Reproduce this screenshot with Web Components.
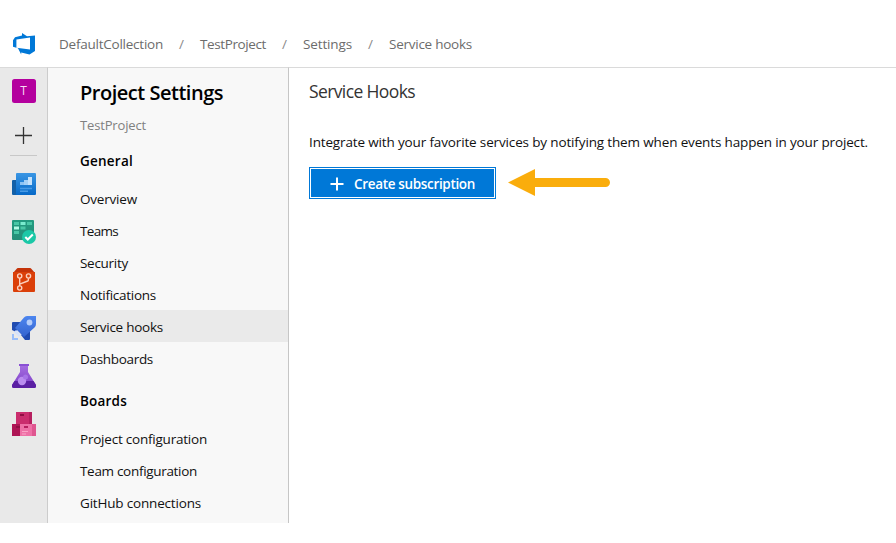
<!DOCTYPE html>
<html lang="en">
<head>
<meta charset="utf-8">
<title>Service hooks - Project Settings</title>
<style>
html,body{margin:0;height:543px;overflow:hidden;background:#fff}
body{font-family:"Open Sans","Noto Sans",sans-serif;font-size:13.5px;color:#111}
</style>
</head>
<body>
<settings-app></settings-app>

<template id="t-app">
<style>
:host{display:grid;grid-template:67px 456px / 48px 241px 1fr;width:896px;height:523px;box-sizing:border-box}
top-bar{grid-column:1 / -1}
</style>
<top-bar></top-bar>
<icon-rail></icon-rail>
<settings-nav></settings-nav>
<hooks-page></hooks-page>
</template>

<template id="t-top">
<style>
:host{display:flex;align-items:flex-end;box-sizing:border-box;height:67px;color:#6c6c6c}
.logo{width:22px;height:22px;margin:0 24px 12px 13px}
nav{display:flex;height:46px;align-items:center}
.s{width:37px;text-align:center;color:#8a8a8a}
</style>
<svg class="logo" viewBox="0 0 22 22"><path fill="#0078d7" fill-rule="evenodd" d="M0 7.200 2 4.200l7-1.700V0l5 3.200 8-.7v15.500l-5.500 3.400-8.300-1.800v1.800L5 15.200l-5-1.500zM3.400 6.400v8.300l13.600 1.800V4.500z"/></svg>
<nav><ui-text w="104">DefaultCollection</ui-text><span class="s">/</span><ui-text w="66">TestProject</ui-text><span class="s">/</span><ui-text w="49">Settings</ui-text><span class="s">/</span><ui-text w="83">Service hooks</ui-text></nav>
</template>

<template id="t-rail">
<style>
:host{display:flex;flex-direction:column;align-items:center;box-sizing:border-box;background:#e9e9e9;border-right:1px solid #ccc;border-top:1px solid #dadada;padding-top:11px}
svg{width:24px;height:24px;display:block;flex:none;margin-bottom:24px}
.tile{width:24px;height:24px;border-radius:2.5px;background:#b4009e;color:#f7d9f3;display:flex;align-items:center;justify-content:center;font-size:12px;line-height:24px;flex:none}
.plus{width:18px;height:18px;margin:23px 1px 11px 0}
hr{width:27px;height:1px;border:0;background:#c8c8c8;margin:0 0 16px;flex:none}
</style>
<div class="tile">T</div>
<svg class="plus" viewBox="0 0 18 18"><path d="M1 9.500h17M9.500 1v17" stroke="#333" stroke-width="1.300"/></svg>
<hr>
<svg viewBox="0 0 24 24"><defs><linearGradient id="a" x2="0" y2="1"><stop stop-color="#3a96e4"/><stop offset="1" stop-color="#0669c8"/></linearGradient></defs><path fill="#1260a8" d="M0 9q0-1 1-1h4v15H1q-1 0-1-1z"/><path fill="url(#a)" d="M4 2q0-1 1-1h18q1 0 1 1v20q0 1-1 1H3q1 0 1-1z"/><path fill="#8dc3f3" d="M8 10h4v3H8z"/><path fill="#a4d0f7" d="M12 8h4v5h-4z"/><path fill="#c5e2fc" d="M16 5h4v8h-4z"/><path stroke="#489be6" stroke-width="1.600" d="M8 16.500h12M8 19.200h8"/></svg>
<svg viewBox="0 0 24 24"><defs><linearGradient id="b" x2="0" y2="1"><stop stop-color="#229b80"/><stop offset="1" stop-color="#258f79"/></linearGradient></defs><rect width="22" height="20" rx="1" fill="url(#b)"/><path fill="#48c7a6" d="M2 2h5v3H2zM15 2h5v3h-5zM8.500 6.500h5v3h-5zM2 11h5v3H2z"/><path fill="#79ebce" d="M8.500 2h5v3h-5z"/><path fill="#b1fae5" d="M2 6.500h5v3H2z"/><circle cx="17" cy="17" r="7" fill="#1bc8a7"/><path d="m13.300 17 2.500 2.500 5-5" fill="none" stroke="#fff" stroke-width="2"/></svg>
<svg viewBox="0 0 24 24"><path fill="#c43309" d="M1 5 4.500 1q.7-1 1.500-1h12q.8 0 1.500 1L23 5z"/><path fill="#db3f09" d="M1 4h22v19q0 1-1 1H2q-1 0-1-1z"/><g fill="none" stroke="#fbd0bf" stroke-width="1.400"><circle cx="7.700" cy="8" r="2.100"/><circle cx="16.500" cy="8" r="2.100"/><circle cx="7.700" cy="20" r="2.100"/><path d="M7.700 10v8M7.700 16.200l8-3.200q.8-.4.8-2.800"/></g></svg>
<svg viewBox="0 0 24 24"><defs><linearGradient id="c" x2="0" y2="1"><stop stop-color="#4d86ef"/><stop offset="1" stop-color="#3463cf"/></linearGradient></defs><path fill="#204bb1" d="M0 7q0-1 1-1h8l-5 10-4-2zM9 19l9-6v10q0 1-1 1h-4z"/><path fill="url(#c)" d="M15 0h9v8q0 2-1.500 3.500L12 21l-9-9L12 1.500Q13 0 15 0z"/><circle cx="17.500" cy="6.500" r="2.900" fill="#b4cdfb"/><path fill="#d5e2fc" d="m4 14 5 5-2 2-5-5z"/><path fill="#99bdfa" d="M0 18h2v4h4v2H0z"/></svg>
<svg viewBox="0 0 24 24"><defs><linearGradient id="d" x2="0" y2="1"><stop stop-color="#a46ce0"/><stop offset="1" stop-color="#7b3cc5"/></linearGradient></defs><path fill="url(#d)" d="M8 2h8v6l8 13q.5 3-2 3H2q-2.500 0-2-3L8 8z"/><path fill="#5b20a3" d="M2.500 17h19L24 21q.5 3-2 3H2q-2.500 0-2-3z"/><path fill="#8a50d4" d="M7 0h10v2H7z"/><circle cx="10" cy="17" r="4.200" fill="#ba8cef"/><circle cx="13.500" cy="13" r="2.500" fill="#a673e7"/></svg>
<svg viewBox="0 0 24 24"><path fill="#ca2d6d" d="M4 0h16v12H4z"/><path fill="#b61f5f" d="M17 0h3v12h-3z"/><path fill="#ae1555" d="M0 12h9v12H0z"/><path fill="#ee70a6" d="M8 12h16v12H8z"/><path fill="#df5690" d="M20 12h4v12h-4z"/><path fill="#8f0f43" d="M8 2h4v2H8zM4 14h4v2H4z"/><path fill="#b61f5f" d="M12 14h4v2h-4z"/><path fill="#f9a4c7" d="M10 19h6v1h-6zM10 21.500h4v1h-4z"/></svg>
</template>

<template id="t-nav">
<style>
:host{display:block;box-sizing:border-box;background:#f8f8f8;border-right:1px solid #c6c6c6;border-top:1px solid #dadada;color:#111}
header{padding:11px 0 0 32px}
h1{font-size:20px;line-height:28px;font-weight:600;margin:0;color:#000}
p{font-size:13px;line-height:20px;color:#808080;margin:8px 0 0}
h2{font-size:13.5px;font-weight:600;line-height:20px;margin:0;padding:17px 0 11px 32px;color:#000}
h2.first{padding-top:16px;padding-bottom:11px}
</style>
<header><h1><ui-text w="143">Project Settings</ui-text></h1><p><ui-text w="66">TestProject</ui-text></p></header>
<h2 class="first"><ui-text w="53">General</ui-text></h2>
<nav-item w="57">Overview</nav-item><nav-item w="38">Teams</nav-item><nav-item w="48">Security</nav-item><nav-item w="76">Notifications</nav-item><nav-item w="83" selected>Service hooks</nav-item><nav-item w="73">Dashboards</nav-item>
<h2><ui-text w="47">Boards</ui-text></h2>
<nav-item w="127">Project configuration</nav-item><nav-item w="117">Team configuration</nav-item><nav-item w="121">GitHub connections</nav-item>
</template>

<template id="t-page">
<style>
:host{display:block;box-sizing:border-box;border-top:1px solid #dadada;padding:9px 0 0 20px}
h1{font-weight:400;font-size:17.5px;line-height:28px;margin:0;color:#333}
p{line-height:20px;margin:27px 0 15px}
.row{display:flex;align-items:center;gap:12px}
.arrow{width:103px;height:28px;display:block}
</style>
<h1><ui-text w="106">Service Hooks</ui-text></h1>
<p><ui-text w="559">Integrate with your favorite services by notifying them when events happen in your project.</ui-text></p>
<div class="row"><primary-button>Create subscription</primary-button><svg class="arrow" viewBox="0 0 103 28"><path fill="#faad0c" d="M0 13.500 27 0v9h70.500a4.500 4.500 0 0 1 0 9H27v9z"/></svg></div>
</template>

<script>
class TemplateElement extends HTMLElement {
  constructor() {
    super();
    this.attachShadow({mode: 'open'}).append(document.getElementById(this.constructor.template).content.cloneNode(true));
  }
}
const fromTemplate = (tag, id) => customElements.define(tag, class extends TemplateElement { static template = id; });
fromTemplate('settings-app', 't-app');
fromTemplate('top-bar', 't-top');
fromTemplate('icon-rail', 't-rail');
fromTemplate('settings-nav', 't-nav');
fromTemplate('hooks-page', 't-page');

customElements.define('nav-item', class extends HTMLElement {
  constructor() {
    super();
    this.attachShadow({mode: 'open'}).innerHTML = `<style>:host{display:flex;align-items:center;box-sizing:border-box;height:32px;padding:2px 0 0 32px}:host([selected]){background:#eaeaea}</style><ui-text w="${this.getAttribute('w')}">${this.textContent}</ui-text>`;
  }
});

customElements.define('primary-button', class extends HTMLElement {
  constructor() {
    super();
    this.attachShadow({mode: 'open'}).innerHTML = `<style>:host{display:block}button{display:flex;align-items:center;box-sizing:border-box;width:187px;height:32px;border:1px solid #0078d7;box-shadow:inset 0 0 0 1px #fff;background:#0078d7;color:#fff;font:600 13.5px "Open Sans",sans-serif;padding:1px 0 0 20px;margin:0;gap:10px}svg{width:14px;height:14px}</style><button><svg viewBox="0 0 14 14"><path d="M0.500 7h13M7 .5v13" stroke="#fff" stroke-width="2"/></svg><ui-text w="121">${this.textContent}</ui-text></button>`;
  }
});

/* Single-line label tracked evenly to its nominal width. */
customElements.define('ui-text', class extends HTMLElement {
  constructor() {
    super();
    this.attachShadow({mode: 'open'}).innerHTML = '<style>:host{display:inline-block;white-space:nowrap}</style><slot></slot>';
  }
  connectedCallback() {
    const target = Number(this.getAttribute('w'));
    const natural = this.getBoundingClientRect().width;
    this.style.letterSpacing = (target - natural) / this.textContent.length + 'px';
    this.style.width = target + 'px';
  }
});
</script>
</body>
</html>
